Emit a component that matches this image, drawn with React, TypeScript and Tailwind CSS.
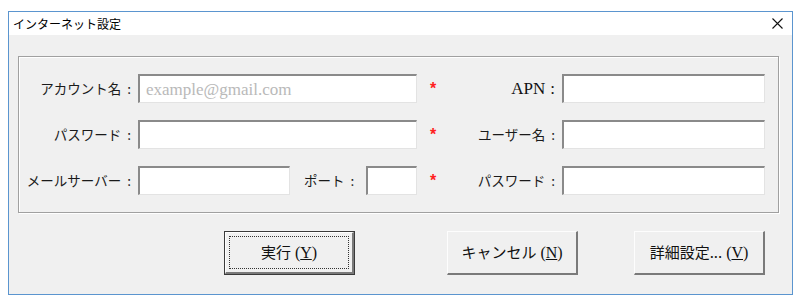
import React from 'react';

const jp = { fontFamily: '"Noto Sans CJK JP", "Noto Sans", sans-serif' };
const serif = { fontFamily: '"Liberation Serif", "Noto Sans CJK JP", serif' };

const Field: React.FC<{ w: string; placeholder?: string }> = ({ w, placeholder }) => (
  <div
    className={`${w} h-[29px] bg-white border-t-2 border-l-2 border-b border-r border-t-[#8a8a8a] border-l-[#8a8a8a] border-b-[#e3e3e3] border-r-[#e3e3e3] flex items-center pl-[6px]`}
  >
    {placeholder && (
      <span className="text-[17px] text-[#b9b9b9] leading-none" style={serif}>
        {placeholder}
      </span>
    )}
  </div>
);

const Star: React.FC = () => (
  <div className="w-[32px] flex justify-center text-[#ff2020] text-[16px] font-bold leading-none" style={{ fontFamily: '"Liberation Sans", sans-serif' }}>
    *
  </div>
);

const Colon: React.FC = () => <span className="ml-[6px]">:</span>;

const Label: React.FC<{ w: string; children: React.ReactNode }> = ({ w, children }) => (
  <div className={`${w} text-right pr-[7px] text-[13.5px] text-[#1a1a1a]`} style={jp}>
    {children}
    <Colon />
  </div>
);

const Btn: React.FC<{ label: string; mnemonic: string; dots?: string; primary?: boolean; className?: string }> = ({
  label,
  mnemonic,
  dots,
  primary,
  className,
}) => (
  <div className={`${className ?? ''} w-[131px] h-[44px] ${primary ? 'border border-[#3a3a3a]' : ''}`}>
    <div className="w-full h-full bg-[#f0f0f0] border-t border-l border-t-[#fdfdfd] border-l-[#fdfdfd] border-b-2 border-r-2 border-b-[#7a7a7a] border-r-[#7a7a7a] p-[3px]">
      <div
        className={`w-full h-full flex items-center justify-center ${primary ? 'border border-dotted border-[#333]' : ''}`}
      >
        <span className="text-[15px] text-[#111]" style={jp}>
          {label}
          {dots}
        </span>
        <span className="text-[16px] text-[#111] ml-[4px]" style={serif}>
          (<span className="underline">{mnemonic}</span>)
        </span>
      </div>
    </div>
  </div>
);

const App: React.FC = () => {
  return (
    <div className="w-[800px] h-[306px] bg-white pt-[11px] pl-[8px]">
      <div className="w-[785px] h-[284px] border border-[#5b95cf] bg-[#f0f0f0] flex flex-col">
        {/* title bar */}
        <div className="h-[23px] bg-white flex items-center justify-between pl-[4px] pr-[9px]">
          <span className="text-[12px] text-black" style={jp}>
            インターネット設定
          </span>
          <svg width="11" height="11" viewBox="0 0 11 11">
            <path d="M0.5 0.5 L10.5 10.5 M10.5 0.5 L0.5 10.5" stroke="#111" strokeWidth="1.1" />
          </svg>
        </div>

        {/* group box */}
        <div className="ml-[9px] mt-[21px] w-[761px] h-[157px] border border-[#a0a0a0] shadow-[inset_1px_1px_0_#fff,1px_1px_0_#fff] pt-[17px] flex flex-col gap-[17px]">
          <div className="flex items-center">
            <Label w="w-[119px]">アカウント名</Label>
            <Field w="w-[279px]" placeholder="example@gmail.com" />
            <Star />
            <div className="w-[113px] text-right pr-[7px] text-[17px] text-[#111]" style={serif}>
              APN<span className="ml-[5px]">:</span>
            </div>
            <Field w="w-[203px]" />
          </div>
          <div className="flex items-center">
            <Label w="w-[119px]">パスワード</Label>
            <Field w="w-[279px]" />
            <Star />
            <Label w="w-[113px]">ユーザー名</Label>
            <Field w="w-[203px]" />
          </div>
          <div className="flex items-center">
            <Label w="w-[119px]">メールサーバー</Label>
            <Field w="w-[152px]" />
            <div className="w-[76px] pl-[14px] text-[13.5px] text-[#1a1a1a]" style={jp}>
              ポート
              <Colon />
            </div>
            <Field w="w-[51px]" />
            <Star />
            <Label w="w-[113px]">パスワード</Label>
            <Field w="w-[203px]" />
          </div>
        </div>

        {/* buttons */}
        <div className="flex mt-[18px] ml-[215px]">
          <Btn label="実行" mnemonic="Y" primary />
          <Btn label="キャンセル" mnemonic="N" className="ml-[92px]" />
          <Btn label="詳細設定" dots="..." mnemonic="V" className="ml-[56px]" />
        </div>
      </div>
    </div>
  );
};

export default App;
